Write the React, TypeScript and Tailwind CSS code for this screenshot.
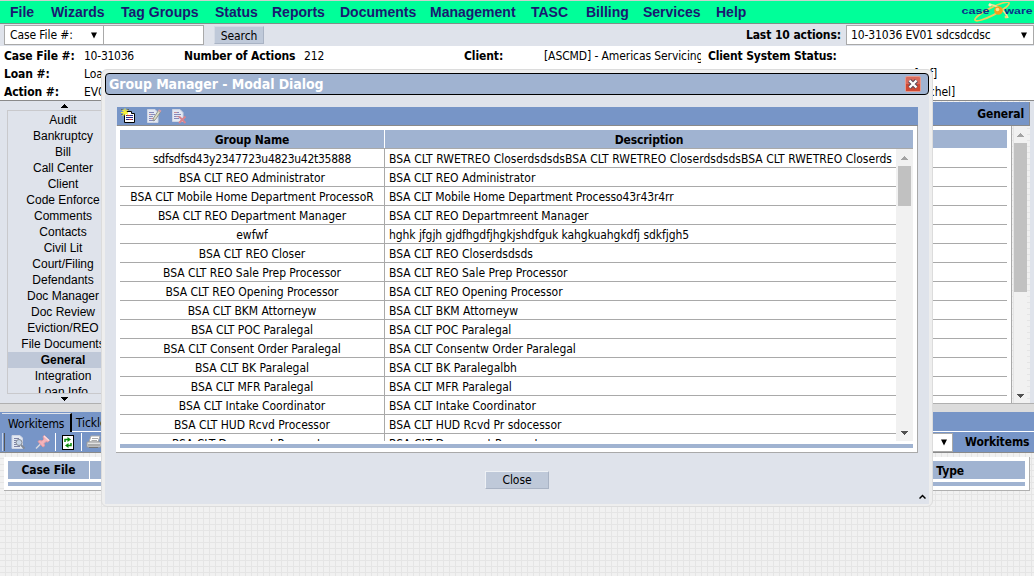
import type { ReactNode } from 'react';

const menu: [string, string][] = [
  ['File', 'w-[41px]'],
  ['Wizards', 'w-[70px]'],
  ['Tag Groups', 'w-[94px]'],
  ['Status', 'w-[57px]'],
  ['Reports', 'w-[68px]'],
  ['Documents', 'w-[90px]'],
  ['Management', 'w-[101px]'],
  ['TASC', 'w-[55px]'],
  ['Billing', 'w-[57px]'],
  ['Services', 'w-[73px]'],
  ['Help', 'w-[40px]'],
];

const sections = [
  'Audit', 'Bankruptcy', 'Bill', 'Call Center', 'Client', 'Code Enforce', 'Comments', 'Contacts', 'Civil Lit',
  'Court/Filing', 'Defendants', 'Doc Manager', 'Doc Review', 'Eviction/REO', 'File Documents', 'General',
  'Integration', 'Loan Info',
];

type Group = { name: string; description: string; nameClass?: string; descriptionClass?: string };

const groups: Group[] = [
  {
    name: 'sdfsdfsd43y2347723u4823u42t35888',
    description: 'BSA CLT RWETREO CloserdsdsdsBSA CLT RWETREO CloserdsdsdsBSA CLT RWETREO Closerds',
    nameClass: 'tracking-[-0.27px]',
    descriptionClass: 'tracking-[0.02px]',
  },
  { name: 'BSA CLT REO Administrator', description: 'BSA CLT REO Administrator' },
  {
    name: 'BSA CLT Mobile Home Department ProcessoR',
    description: 'BSA CLT Mobile Home Department Processo43r43r4rr',
    descriptionClass: 'tracking-[-0.1px]',
  },
  { name: 'BSA CLT REO Department Manager', description: 'BSA CLT REO Departmreent Manager' },
  { name: 'ewfwf', description: 'hghk jfgjh gjdfhgdfjhgkjshdfguk kahgkuahgkdfj sdkfjgh5', descriptionClass: 'tracking-[-0.06px]' },
  { name: 'BSA CLT REO Closer', description: 'BSA CLT REO Closerdsdsds' },
  { name: 'BSA CLT REO Sale Prep Processor', description: 'BSA CLT REO Sale Prep Processor' },
  { name: 'BSA CLT REO Opening Processor', description: 'BSA CLT REO Opening Processor' },
  { name: 'BSA CLT BKM Attorneyw', description: 'BSA CLT BKM Attorneyw' },
  { name: 'BSA CLT POC Paralegal', description: 'BSA CLT POC Paralegal' },
  { name: 'BSA CLT Consent Order Paralegal', description: 'BSA CLT Consentw Order Paralegal' },
  { name: 'BSA CLT BK Paralegal', description: 'BSA CLT BK Paralegalbh' },
  { name: 'BSA CLT MFR Paralegal', description: 'BSA CLT MFR Paralegal' },
  { name: 'BSA CLT Intake Coordinator', description: 'BSA CLT Intake Coordinator' },
  { name: 'BSA CLT HUD Rcvd Processor', description: 'BSA CLT HUD Rcvd Pr sdocessor' },
  { name: 'BSA CLT Document Requestor', description: 'BSA CLT Document Requestor' },
];

function Tri({ up, className }: { up?: boolean; className?: string }) {
  return (
    <svg width="7" height="4" viewBox="0 0 7 4" className={className} shapeRendering="crispEdges">
      <path d={up ? 'M0 4L3.5 0L7 4z' : 'M0 0H7L3.5 4z'} fill="currentColor" />
    </svg>
  );
}

function Caret({ className }: { className?: string }) {
  return (
    <svg width="6" height="7" viewBox="0 0 6 7" className={className}>
      <path d="M0 .5H6L3 6.5z" fill="#000" />
    </svg>
  );
}

function Logo() {
  return (
    <svg width="73" height="20" viewBox="961 2 73 20" className="ml-auto shrink-0">
      <g fill="none" stroke="#efcf5c">
        <ellipse cx="992" cy="11.500" rx="19" ry="3.800" transform="rotate(-27 992 11.5)" strokeWidth="1.800" />
        <path d="M989 4c7 1 16 6 19 14" stroke="#f6e29a" strokeWidth="1.600" />
      </g>
      <text x="961.500" y="14" fontFamily="Liberation Sans" fontWeight="700" fontSize="9.500" fill="#0b2f8a" textLength="28" lengthAdjust="spacingAndGlyphs">case</text>
      <text x="1004.500" y="14" fontFamily="Liberation Sans" fontWeight="700" fontSize="9.500" fill="#0b2f8a" textLength="28" lengthAdjust="spacingAndGlyphs">ware</text>
      <circle cx="998.500" cy="10.500" r="4.300" fill="#f5a01c" />
      <circle cx="997.500" cy="9.500" r="1.800" fill="#ffe08c" />
      <circle cx="990" cy="5" r="1.600" fill="#fbf1bf" />
      <circle cx="1006" cy="17" r="1.400" fill="#f4d774" />
    </svg>
  );
}

function Page({ children, faded }: { children?: ReactNode; faded?: boolean }) {
  return (
    <svg width="16" height="16" viewBox="0 0 16 16" className={faded ? 'opacity-80' : ''}>
      {children}
    </svg>
  );
}

function NewIcon() {
  return (
    <Page>
      <path d="M3.500 3.500H10.500V5.500H13.500V14.500H3.500z" fill="#fff" stroke="#000" />
      <path d="M5 7.500H12M5 9.500H12M5 11.500H12" stroke="#2a2a8c" />
      <path d="M6 7.500H9M8 11.500H11" stroke="#c33" />
      <path d="M1 1.500l6 5M4 .5v7M0 4.500h7M7 1.500L1 7.500" stroke="#f4ef3c" strokeWidth="1.200" />
      <path d="M.5 1l1 1M6.500 2l1-1M.5 7l1-1" stroke="#222" strokeWidth=".9" />
    </Page>
  );
}

function EditIcon() {
  return (
    <Page faded>
      <path d="M1.500 1.500H9L12 4.500V14.500H1.500z" fill="#fff" stroke="#e4e4ea" />
      <path d="M3 4.500H8M3 6.500H9M3 8.500H7M3 10.500H7M3 12.500H9" stroke="#8a86b8" />
      <path d="M3 6.500H5M5 10.500H7" stroke="#d98b8b" />
      <path d="M12.500 2.500L7.500 10L7 13L9.500 11.500L14.500 4z" fill="#f4eec4" stroke="#918d7c" strokeWidth=".9" />
      <path d="M12.500 2L15 3.500" stroke="#f0a0a0" strokeWidth="2" />
    </Page>
  );
}

function DeleteIcon() {
  return (
    <Page faded>
      <path d="M1.500 1.500H9L12 4.500V13.500H1.500z" fill="#fff" stroke="#e4e4ea" />
      <path d="M3 4.500H8M3 6.500H10M3 8.500H8M3 10.500H8" stroke="#8a86b8" />
      <path d="M3 4.500H6M5 8.500H7" stroke="#d98b8b" />
      <path d="M8 8.500L14.500 15M14.500 8.500L8 15" stroke="#f08080" strokeWidth="2" />
    </Page>
  );
}

function PreviewIcon() {
  return (
    <Page faded>
      <path d="M2 1.500H10L12.500 4V14.500H2z" fill="#fff" stroke="#e4e4ea" />
      <path d="M4 4.500H9M4 6.500H7M4 8.500H6M4 10.500H7M4 12.500H10" stroke="#8080a0" />
      <circle cx="9" cy="8.500" r="3" fill="#dbe6f0" stroke="#888" />
      <path d="M11 11L14.500 14.500" stroke="#888" strokeWidth="1.800" />
    </Page>
  );
}

function PinIcon() {
  return (
    <Page>
      <path d="M6 9.500L1 14.500" stroke="#d9d9e0" strokeWidth="1.500" />
      <path d="M9 1.500L14.500 6.500L12.500 8L11 7.500L9 9.500L9.500 12L8 13L3 7.500L4.500 6.500L7 7L9 5L8 3z" fill="#f3b4bb" stroke="#e39aa4" />
      <path d="M9 2L14 6.500" stroke="#fbdde0" strokeWidth="1.300" />
    </Page>
  );
}

function RefreshIcon() {
  return (
    <svg width="12" height="15" viewBox="0 0 12 15">
      <rect x=".5" y=".5" width="11" height="14" fill="#fff" stroke="#000" />
      <path d="M3 7V4.500H6M9 8V10.500H6" fill="none" stroke="#0a8a0a" strokeWidth="1.500" />
      <path d="M5.500 2L9 4.500L5.500 7zM6.500 8L3 10.500L6.500 13z" fill="#0a8a0a" />
    </svg>
  );
}

function PrintIcon() {
  return (
    <Page>
      <path d="M5 2H14L12 8H3z" fill="#fff" stroke="#aaa" />
      <path d="M6 4.500H12M5.500 6.500H11" stroke="#aaa" />
      <path d="M1 8H15V13H1z" fill="#e2e2e2" stroke="#999" />
      <path d="M2 11H14M3 13.500H12" stroke="#777" />
    </Page>
  );
}

function TopBar() {
  return (
    <>
      <nav className="flex h-6 items-center border-t border-b border-t-[#c9d2cd] border-b-[#7f8f88] bg-[#00ff99] pl-[10px] font-['Liberation_Sans',sans-serif] text-[14px] font-bold tracking-[0px] text-[#191970]">
        {menu.map(([label, width]) => (
          <span key={label} className={`${width} shrink-0 whitespace-nowrap`}>{label}</span>
        ))}
        <Logo />
      </nav>
      <div className="flex h-[22px] items-center bg-[#dfe3eb] pl-[4px]">
        <div className="flex h-5 w-[100px] items-center justify-between border border-[#a9a9a9] bg-white pr-[6px] pl-[5px]">
          Case File #:<Caret />
        </div>
        <div className="h-5 w-[100px] border border-l-0 border-[#a9a9a9] bg-white" />
        <div className="ml-[10px] flex h-[18px] w-[50px] items-center justify-center border border-[#a9b3c4] border-t-[#d4dae4] border-l-[#d4dae4] bg-[#bfc9d9] pt-px">
          Search
        </div>
        <span className="ml-auto font-bold">Last 10 actions:</span>
        <div className="ml-[5px] flex h-5 w-[188px] items-center justify-between border border-[#a9a9a9] bg-white pr-[6px] pl-[4px]">
          10-31036 EV01 sdcsdcdsc<Caret />
        </div>
      </div>
      <section className="h-[55px] border-b border-[#8a8a8a] bg-white pl-[4px] leading-[18px] whitespace-nowrap">
        <div className="flex h-[18px] pt-px">
          <b className="w-[80px]">Case File #:</b>
          <span className="w-[100px] tracking-[-0.25px]">10-31036</span>
          <b className="w-[120px]">Number of Actions</b>
          <span className="w-[160px]">212</span>
          <b className="w-[80px]">Client:</b>
          <span className="w-[157px] overflow-hidden">[ASCMD] - Americas Servicing</span>
          <b className="ml-[7px] tracking-[-0.15px]">Client System Status:</b>
        </div>
        <div className="flex h-[18px] pt-px">
          <b className="w-[80px]">Loan #:</b>
          <span>Loan</span>
          <span className="mr-[97px] ml-auto">[ref]</span>
        </div>
        <div className="flex h-[18px] pt-px">
          <b className="w-[80px]">Action #:</b>
          <span>EV01</span>
          <span className="mr-[79px] ml-auto">[Rachel]</span>
        </div>
      </section>
    </>
  );
}

function Workspace() {
  return (
    <div className="flex h-[302px]">
      <aside className="flex w-[120px] flex-col items-center bg-[#dfe3eb]">
        <Tri up className="mt-[3px] mr-[-9px] mb-[2px] shrink-0" />
        <ul className="ml-[7px] h-[284px] w-[113px] overflow-hidden border border-[#c9c9cc] pt-px pb-px font-['Liberation_Sans',sans-serif] tracking-[0px]">
          {sections.map((s) => (
            <li key={s} className={s === 'General' ? 'h-4 bg-[#bfc8d8] pr-px text-center leading-4 font-bold' : 'h-4 pr-px text-center leading-4'}>
              {s}
            </li>
          ))}
        </ul>
        <Tri className="mt-[3px] mr-[-9px] shrink-0" />
      </aside>
      <main className="flex flex-1 flex-col border-r-4 border-[#dfe3eb]">
        <h2 className="mt-px flex h-6 items-center justify-end border-r border-b border-[#8a8a8a] bg-[#7795c7] pr-[5px] font-bold">
          General
        </h2>
        <div className="flex h-[277px]">
          <div className="flex-1 border-r border-[#a9a9a9] bg-white pt-1 pr-1">
            <div className="h-[18px] bg-[#a0b3d1]" />
            {Array.from({ length: 13 }, (_, i) => (
              <div key={i} className={i === 0 ? 'h-5 border-b border-[#a9a9a9]' : 'h-[19px] border-b border-[#a9a9a9]'} />
            ))}
          </div>
          <div className="mr-[3px] ml-[2px] flex w-[13px] flex-col items-center bg-[#f1f1f1] text-[#a3a3a3]">
            <Tri up className="mt-[7px] mb-[6px]" />
            <div className="h-[149px] w-full bg-[#c1c1c1]" />
            <Tri className="mt-auto mb-[5px] text-[#505050]" />
          </div>
        </div>
      </main>
    </div>
  );
}

function Workitems() {
  return (
    <>
      <div className="h-[9px] border-t border-[#b0b0b0] bg-[#dcdcdc]" />
      <div className="flex h-[20px] bg-[#7795c7] pt-px pl-[2px]">
        <div className="w-[70px] border-t border-r-2 border-t-[#dfe3eb] border-r-black pl-[6px] leading-[20px]">Workitems</div>
        <div className="flex-1 border-b border-white pl-[4px] leading-[20px]">Tickler</div>
      </div>
      <div className="flex h-[21px] items-center border-b border-[#8a8a8a] bg-[#7795c7] pl-[2px]">
        <div className="mr-[5px] h-[18px] w-[3px] border-x border-r-[#555] border-l-[#c5d2e8]" />
        <PreviewIcon />
        <span className="w-[9px]" />
        <PinIcon />
        <span className="mr-[6px] ml-[4px] h-[18px] w-px bg-white" />
        <RefreshIcon />
        <span className="mr-[4px] ml-[7px] h-[18px] w-px bg-white" />
        <PrintIcon />
        <div className="ml-auto flex h-[19px] w-[60px] items-center justify-end border border-[#a9a9a9] bg-white pr-[5px]">
          <Caret />
        </div>
        <b className="w-[81px] pl-[12px]">Workitems</b>
      </div>
      <div className="mt-[4px] mr-[4px] ml-[4px] border-r border-b border-[#b0b0b0] bg-white p-1">
        <div className="flex h-[18px] items-center bg-[#a0b3d1] font-bold">
          <span className="h-full w-[82px] border-r border-white text-center leading-[19px]">Case File</span>
          <span className="mr-[61px] ml-auto pt-px">Type</span>
        </div>
        <div className="mt-[3px] h-1 bg-[#a0b3d1]" />
      </div>
    </>
  );
}

function GroupManager() {
  return (
    <div className="absolute top-[69px] left-[101px] flex h-[438px] w-[832px] flex-col rounded-[6px] border border-[#dcdcdc] bg-[#eeeeee] px-[3px] pt-[3px] pb-[2px]">
      <header className="flex h-[22px] shrink-0 items-center justify-between rounded-[4px] border border-black bg-[#a0b3d1] pr-[7px] pl-[3px]">
        <span className="text-[14px] font-bold tracking-[-0.07px] text-white">Group Manager - Modal Dialog</span>
        <svg width="16" height="16" viewBox="0 0 16 16">
          <rect x=".5" y=".5" width="15" height="15" rx="1.500" fill="#d9695b" stroke="#e59a8e" />
          <rect x="1" y="8" width="14" height="7" fill="#cf4833" />
          <path d="M4.500 4.500L11.500 11.500M11.500 4.500L4.500 11.500" stroke="#5c4c5c" strokeWidth="4.400" />
          <path d="M4.500 4.500L11.500 11.500M11.500 4.500L4.500 11.500" stroke="#fff" strokeWidth="2.300" />
        </svg>
      </header>
      <div className="flex flex-1 flex-col bg-[#dfe3eb] pr-[11px] pl-[11px]">
        <div className="mt-[12px] ml-px flex h-[19px] shrink-0 items-center gap-[9px] border-b border-[#8a8a8a] bg-[#7795c7] pl-[4px]">
          <NewIcon />
          <EditIcon />
          <DeleteIcon />
        </div>
        <div className="flex h-[327px] shrink-0 flex-col border-r border-b border-[#a9a9a9] bg-white pt-1 pr-1 pl-1">
          <div className="flex h-[19px] shrink-0 border-b border-[#a9a9a9] bg-[#a0b3d1] text-center leading-[20px] font-bold">
            <span className="w-[265px] border-r border-white">Group Name</span>
            <span className="flex-1">Description</span>
          </div>
          <div className="flex h-[292px] shrink-0 overflow-hidden">
            <div className="flex-1">
              {groups.map(({ name, description, nameClass, descriptionClass }) => (
                <div key={name} className="flex h-[19px] border-b border-[#a9a9a9] leading-[20px] whitespace-nowrap">
                  <span className={`w-[265px] border-r border-[#a9a9a9] text-center ${nameClass ?? 'tracking-[-0.04px]'}`}>{name}</span>
                  <span className={`pl-1 ${descriptionClass ?? 'tracking-[-0.02px]'}`}>{description}</span>
                </div>
              ))}
            </div>
            <div className="flex w-[17px] flex-col items-center bg-[#f1f1f1] text-[#a3a3a3]">
              <Tri up className="mt-[7px] mb-[6px] shrink-0" />
              <div className="h-[40px] w-[13px] bg-[#c1c1c1]" />
              <Tri className="mt-auto mb-[6px] text-[#505050]" />
            </div>
          </div>
          <div className="mt-[3px] h-1 bg-[#a0b3d1]" />
        </div>
        <div className="mt-[18px] flex h-[18px] w-[64px] items-center justify-center self-center border border-[#a9b3c4] border-t-[#eef1f5] border-l-[#eef1f5] bg-[#bfc9d9]">
          Close
        </div>
        <svg width="7" height="5" viewBox="0 0 7 5" className="mt-auto mr-[-8px] mb-[5px] self-end">
          <path d="M.5 4.500L3.500 1.500L6.500 4.500" fill="none" stroke="#000" strokeWidth="1.500" />
        </svg>
      </div>
    </div>
  );
}

export default function App() {
  return (
    <div className="relative h-[576px] w-[1034px] overflow-hidden bg-[#f1f1f1] bg-[linear-gradient(to_right,#e5e5e5_1px,transparent_1px),linear-gradient(to_bottom,#e5e5e5_1px,transparent_1px)] bg-[size:6px_6px] bg-[position:5px_2px] font-['DejaVu_Sans_Condensed','DejaVu_Sans',sans-serif] text-[12px] leading-[18px] tracking-[-0.1px] text-black">
      <TopBar />
      <Workspace />
      <Workitems />
      <GroupManager />
    </div>
  );
}
